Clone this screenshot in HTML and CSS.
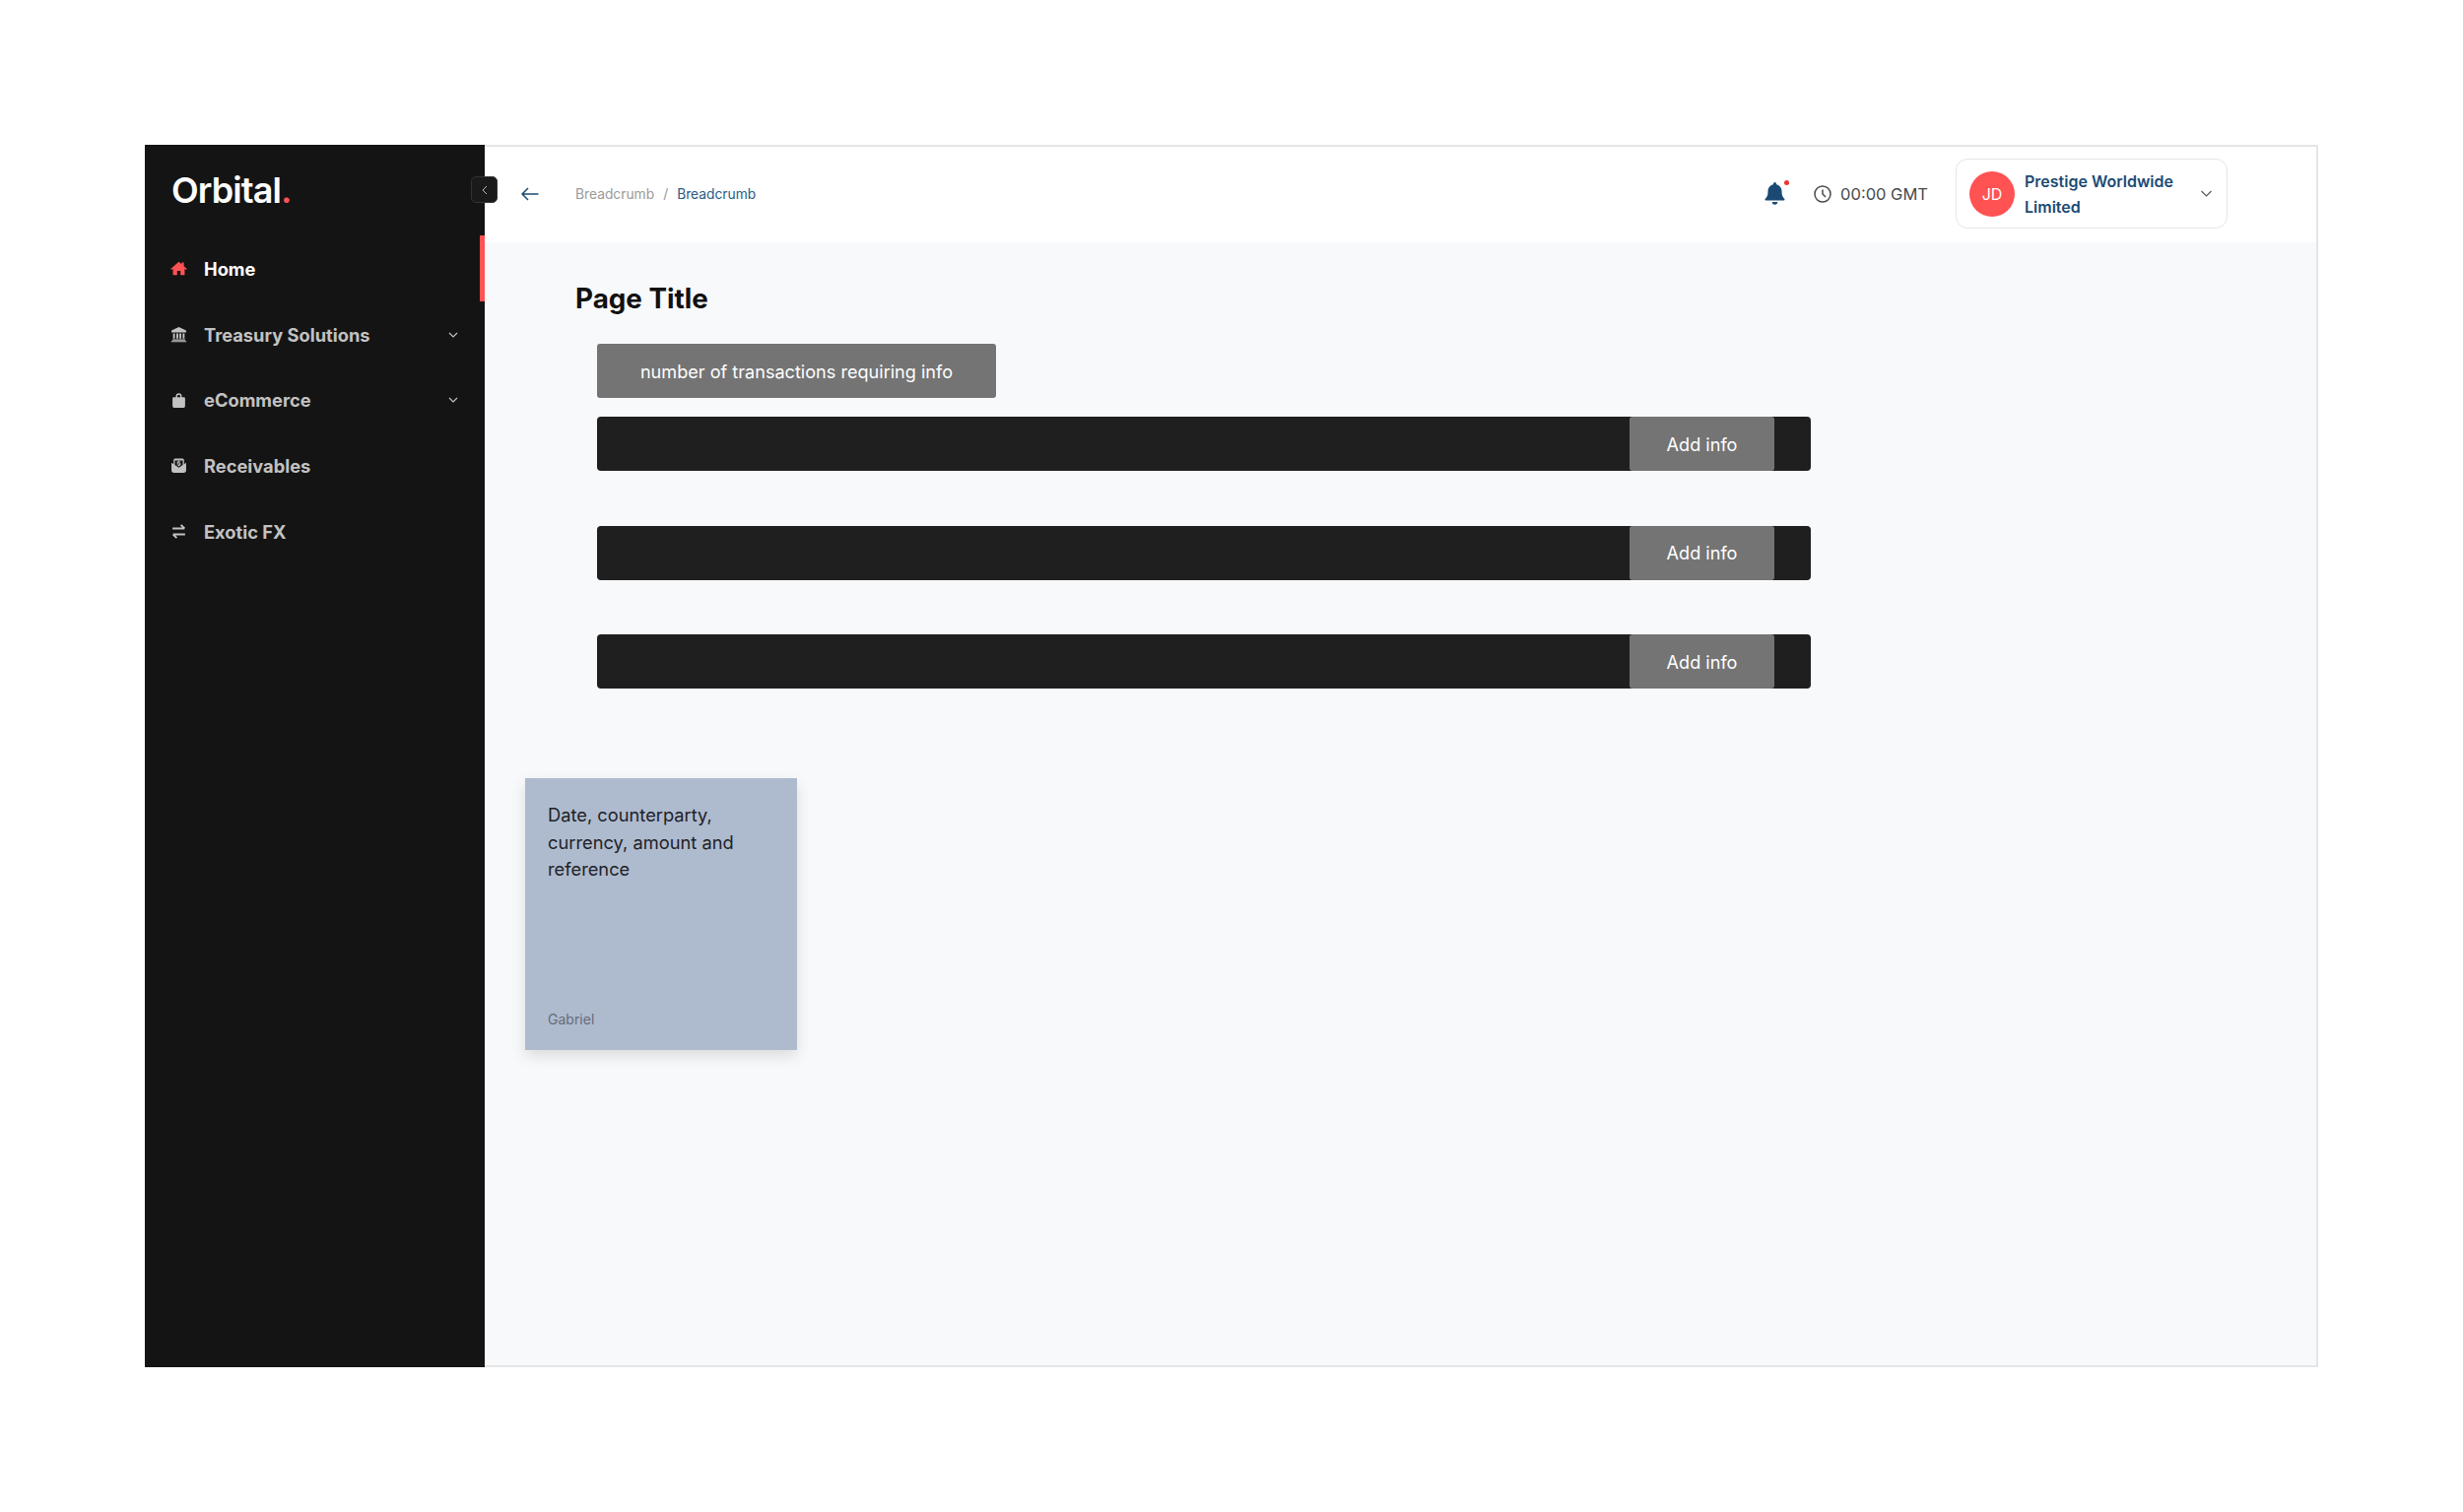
FILE: index.html
```html
<!DOCTYPE html>
<html lang="en">
<head>
<meta charset="utf-8">
<title>Orbital</title>
<link rel="stylesheet" href="styles.css">
</head>
<body>
<div class="app">
  <aside class="sidebar">
    <div class="logo">Orbital<span class="logo-dot">.</span></div>
    <nav class="nav">
      <a class="nav-item active">
        <svg class="nav-icon" viewBox="0 0 16 16"><path fill="currentColor" d="M8 1.600.2 8.400l.9 1L2.400 8.300v6.100h4v-4h3.200v4h4V8.300l1.300 1.100.9-1-3-2.600V2.400h-2v1.700z"/></svg>
        <span class="nav-label">Home</span>
      </a>
      <a class="nav-item">
        <svg class="nav-icon" viewBox="0 0 16 16"><path fill="currentColor" d="M8 1 1 4.300V6h14V4.300zM2.500 7v5h1.800V7zm3.200 0v5h1.800V7zm2.800 0v5h1.800V7zm3.200 0v5h1.800V7zM1.800 12.800v1H14.200v-1zM.8 14.400V15.400h14.400v-1z"/></svg>
        <span class="nav-label">Treasury Solutions</span>
        <svg class="nav-chevron" viewBox="0 0 10 6"><path d="M1 1l4 4 4-4" fill="none" stroke="currentColor" stroke-width="1.200"/></svg>
      </a>
      <a class="nav-item">
        <svg class="nav-icon" viewBox="0 0 16 16"><path fill="currentColor" d="M5.200 5V4a2.800 2.800 0 0 1 5.600 0v1H13a1 1 0 0 1 1 1v7.500a1.500 1.500 0 0 1-1.500 1.500h-9A1.500 1.500 0 0 1 2 13.500V6a1 1 0 0 1 1-1zm1.300 0h3V4a1.500 1.500 0 0 0-3 0z"/></svg>
        <span class="nav-label">eCommerce</span>
        <svg class="nav-chevron" viewBox="0 0 10 6"><path d="M1 1l4 4 4-4" fill="none" stroke="currentColor" stroke-width="1.200"/></svg>
      </a>
      <a class="nav-item">
        <svg class="nav-icon" viewBox="0 0 16 16"><path fill="currentColor" fill-rule="evenodd" d="M3 3a1.500 1.500 0 0 1 1.500-1.500h7A1.500 1.500 0 0 1 13 3v3.800l2-1.300V13a2 2 0 0 1-2 2H3a2 2 0 0 1-2-2V5.500l2 1.300zm1.200.2v4.400L8 10l3.800-2.400V3.200z"/><path fill="currentColor" d="M7.500 3.600h1v.7h1.200v.9H7.600v.6h2.100v2.100H8.500v.7h-1v-.7H6.300v-.9h2.100v-.6H6.300V4.300h1.200z"/></svg>
        <span class="nav-label">Receivables</span>
      </a>
      <a class="nav-item">
        <svg class="nav-icon" viewBox="0 0 16 16"><path d="M2 5.200h11.500M10 1.800l3.500 3.400M14 10.800H2.500M6 14.200l-3.500-3.400" fill="none" stroke="currentColor" stroke-width="1.800"/></svg>
        <span class="nav-label">Exotic FX</span>
      </a>
    </nav>
    <button class="collapse">
      <svg class="collapse-icon" viewBox="0 0 6 10"><path d="M5 1 1 5l4 4" fill="none" stroke="currentColor" stroke-width="1"/></svg>
    </button>
  </aside>
  <div class="content">
    <header class="topbar">
      <svg class="back" viewBox="0 0 18 14"><path d="M17.500 7H1M7 1 1 7l6 6" fill="none" stroke="currentColor" stroke-width="1.500"/></svg>
      <div class="crumbs">
        <span class="crumb">Breadcrumb</span>
        <span class="crumb-sep">/</span>
        <span class="crumb-current">Breadcrumb</span>
      </div>
      <div class="topbar-right">
        <div class="bell">
          <svg class="bell-icon" viewBox="0 0 21 23"><path fill="currentColor" d="M10.500 0a1.500 1.500 0 0 1 1.500 1.500v.8c3.400.7 5.500 3.600 5.500 7 0 4.200 1 5.800 2.800 7.700.500.500.2 1.500-.700 1.500H1.400c-.9 0-1.200-1-.7-1.500 1.800-1.900 2.800-3.500 2.800-7.700 0-3.400 2.100-6.300 5.500-7v-.8A1.500 1.500 0 0 1 10.500 0zM7.800 20h5.400a2.700 2.700 0 0 1-5.400 0z"/></svg>
          <span class="bell-dot"></span>
        </div>
        <div class="time">
          <svg class="clock" viewBox="0 0 18 18"><circle cx="9" cy="9" r="8" fill="none" stroke="currentColor" stroke-width="1.500"/><path d="M9 4.500V9l3 3" fill="none" stroke="currentColor" stroke-width="1.500"/></svg>
          <span>00:00 GMT</span>
        </div>
        <div class="account">
          <span class="avatar">JD</span>
          <span class="account-name">Prestige Worldwide Limited</span>
          <svg class="account-chevron" viewBox="0 0 12 7"><path d="M1 1l5 5 5-5" fill="none" stroke="currentColor" stroke-width="1.100"/></svg>
        </div>
      </div>
    </header>
    <main class="main">
      <h1 class="title">Page Title</h1>
      <div class="chip">number of transactions requiring info</div>
      <div class="rows">
        <div class="row"><span class="add">Add info</span></div>
        <div class="row"><span class="add">Add info</span></div>
        <div class="row"><span class="add">Add info</span></div>
      </div>
      <div class="note">
        <p class="note-text">Date, counterparty, currency, amount and reference</p>
        <p class="note-author">Gabriel</p>
      </div>
    </main>
  </div>
</div>
</body>
</html>
```

FILE: styles.css
```css
* { box-sizing: border-box; }
html, body { margin: 0; height: 100%; }
body {
  background: #fff;
  padding: 147px 147px 0;
  font-family: "Inter", "Liberation Sans", sans-serif;
}
.app {
  display: flex;
  width: 2206px;
  height: 1241px;
  border: 2px solid #e4e5e7;
  border-left: 0;
  background: #f8f9fb;
}
.sidebar {
  position: relative;
  flex: 0 0 345px;
  margin-top: -2px;
  margin-bottom: -2px;
  background: #141414;
  color: #c2c2c2;
}
.logo {
  height: 92px;
  padding: 24px 0 0 27px;
  color: #fff;
  font-size: 36px;
  line-height: 44px;
  font-weight: 600;
  letter-spacing: -0.9px;
}
.logo-dot { color: #ff5252; }
.nav { display: flex; flex-direction: column; }
.nav-item {
  position: relative;
  display: flex;
  align-items: center;
  height: 66.7px;
  padding: 1px 0 0 26px;
  font-size: 18.3px;
  font-weight: 700;
}
.nav-item.active { color: #fff; }
.nav-item.active .nav-icon { color: #ff5252; }
.nav-item.active::after {
  content: "";
  position: absolute;
  top: 0;
  right: 0;
  width: 5px;
  height: 100%;
  background: #ff5252;
}
.nav-icon { width: 17px; height: 17px; flex: none; }
.nav-label { margin-left: 17px; }
.nav-chevron { width: 10px; height: 6px; margin-left: auto; margin-right: 27px; flex: none; }
.collapse {
  position: absolute;
  top: 32px;
  right: -13px;
  display: flex;
  align-items: center;
  justify-content: center;
  width: 27px;
  height: 27px;
  padding: 0;
  background: #1a1a1a;
  border: 1px solid #333;
  border-radius: 5px;
  color: #bbb;
}
.collapse-icon { width: 6px; height: 10px; }
.content { flex: 1; display: flex; flex-direction: column; min-width: 0; }
.topbar {
  flex: 0 0 97px;
  display: flex;
  align-items: center;
  padding: 0 90px 2px 37px;
  background: #fff;
}
.back { width: 18px; height: 14px; color: #1a4a73; flex: none; }
.crumbs {
  display: flex;
  align-items: center;
  margin-left: 37px;
  font-size: 13.8px;
}
.crumb { color: #9a9a9a; }
.crumb-sep { margin: 0 9px; color: #9a9a9a; }
.crumb-current { color: #2a5a85; }
.topbar-right { display: flex; align-items: center; margin-left: auto; }
.bell { position: relative; width: 21px; height: 23px; color: #1a4a73; }
.bell-icon { display: block; width: 21px; height: 23px; }
.bell-dot {
  position: absolute;
  top: -2px;
  right: -4px;
  width: 5px;
  height: 5px;
  border-radius: 50%;
  background: #ee3333;
}
.time {
  display: flex;
  align-items: center;
  margin-left: 29px;
  color: #4a4a4a;
  font-size: 16.5px;
}
.clock { width: 18px; height: 18px; margin-right: 9px; }
.account {
  display: flex;
  align-items: center;
  width: 276px;
  height: 71px;
  margin-left: 28px;
  padding: 0 14px 0 13px;
  background: #fff;
  border: 1px solid #e4e5e7;
  border-radius: 12px;
}
.avatar {
  flex: none;
  display: flex;
  align-items: center;
  justify-content: center;
  width: 46px;
  height: 46px;
  border-radius: 50%;
  background: #ff5252;
  color: #fff;
  font-size: 16px;
}
.account-name {
  width: 170px;
  margin-left: 10px;
  color: #1a4a73;
  font-size: 16px;
  line-height: 26px;
  font-weight: 600;
}
.account-chevron { width: 13px; height: 7px; margin-left: auto; color: #555; flex: none; }
.main { flex: 1; padding: 0 0 0 41px; }
.title {
  margin: 39px 0 0 51px;
  color: #111;
  font-size: 27.8px;
  line-height: 36px;
  font-weight: 700;
}
.chip {
  display: flex;
  align-items: center;
  justify-content: center;
  width: 405px;
  height: 55px;
  margin: 28px 0 0 73px;
  background: #747474;
  border-radius: 3px;
  color: #fff;
  font-size: 18.100px;
}
.rows { display: flex; flex-direction: column; gap: 55.500px; margin: 19px 0 0 73px; }
.row {
  display: flex;
  width: 1232px;
  height: 55px;
  padding-right: 37px;
  justify-content: flex-end;
  background: #1f1f1f;
  border-radius: 4px;
}
.add {
  display: flex;
  align-items: center;
  justify-content: center;
  width: 147px;
  background: #747474;
  border-radius: 3px;
  color: #fff;
  font-size: 18.100px;
}
.note {
  display: flex;
  flex-direction: column;
  justify-content: space-between;
  width: 276px;
  height: 276px;
  margin-top: 91px;
  padding: 24px 23px 22px;
  background: #aebbcf;
  box-shadow: 0 6px 14px rgba(0, 0, 0, 0.12);
  color: #1f2226;
}
.note-text { margin: 0; font-size: 18.300px; line-height: 27.500px; }
.note-author { margin: 0; color: #666d78; font-size: 14px; line-height: 18px; }
```
